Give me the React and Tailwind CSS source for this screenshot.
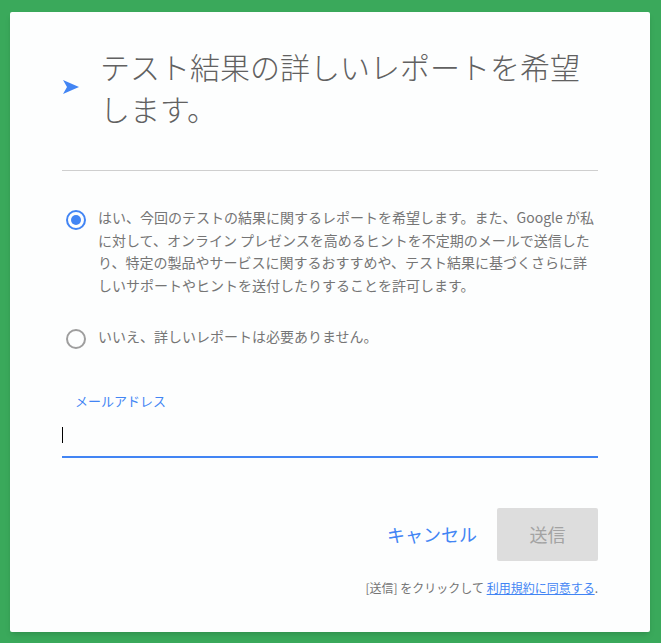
const SendArrow = () => (
  <svg width="16" height="14" viewBox="0 0 16 14" className="shrink-0">
    <path d="M0 0 L16 7 L0 14 L4 7 Z" fill="#4285f4" />
  </svg>
);

const Radio = ({ checked }) => (
  <span
    className={`mt-[4px] flex size-[20px] shrink-0 items-center justify-center rounded-full border-2 ${
      checked ? "border-[#4285f4]" : "border-[#9e9e9e]"
    }`}
  >
    {checked && <span className="size-[10px] rounded-full bg-[#4285f4]" />}
  </span>
);

export default function App() {
  return (
    <div
      className="h-[643px] w-[661px] bg-[#3aa95b] pl-[10px] pt-[12px]"
      style={{ fontFamily: '"Noto Sans CJK JP", "Noto Sans", sans-serif' }}
    >
      <div className="flex h-[620px] w-[640px] flex-col rounded-[2px] bg-[#fdfefe] px-[52px] pt-[33px] shadow-md">
        {/* header */}
        <div className="flex items-center gap-[21px] pl-[1px]">
          <SendArrow />
          <h1 className="text-[30px] leading-[42px] font-light text-[#616161]">
            テスト結果の詳しいレポートを希望します。
          </h1>
        </div>

        <div className="mt-[41px] h-px bg-[#cfcfcf]" />

        {/* options */}
        <div className="mt-[35px] flex gap-[12px] pl-[4px]">
          <Radio checked />
          <p className="text-[14px] leading-[22.5px] text-[#757575]">
            はい、今回のテストの結果に関するレポートを希望します。また、Google が私に対して、オンライン プレゼンスを高めるヒントを不定期のメールで送信したり、特定の製品やサービスに関するおすすめや、テスト結果に基づくさらに詳しいサポートやヒントを送付したりすることを許可します。
          </p>
        </div>

        <div className="mt-[29px] flex gap-[12px] pl-[4px]">
          <Radio />
          <p className="text-[14px] leading-[22px] text-[#757575]">
            いいえ、詳しいレポートは必要ありません。
          </p>
        </div>

        {/* email */}
        <label className="mt-[43px] pl-[13px] text-[13px] leading-[18px] text-[#4285f4]">
          メールアドレス
        </label>
        <div className="mt-[16px] h-[32px] border-b-2 border-[#4285f4] pt-[1px]">
          <span className="block h-[16px] w-px bg-black" />
        </div>

        {/* actions */}
        <div className="mt-[50px] flex items-center justify-end gap-[20px]">
          <button className="text-[18px] text-[#4285f4]">キャンセル</button>
          <button className="h-[53px] w-[101px] rounded-[2px] bg-[#dddddd] text-[18px] text-[#a3a3a3]">
            送信
          </button>
        </div>

        <p className="mt-[18px] text-right text-[12px] leading-[18px] text-[#757575]">
          [送信] をクリックして{" "}
          <a className="text-[#4285f4] underline">利用規約に同意する</a>.
        </p>
      </div>
    </div>
  );
}
